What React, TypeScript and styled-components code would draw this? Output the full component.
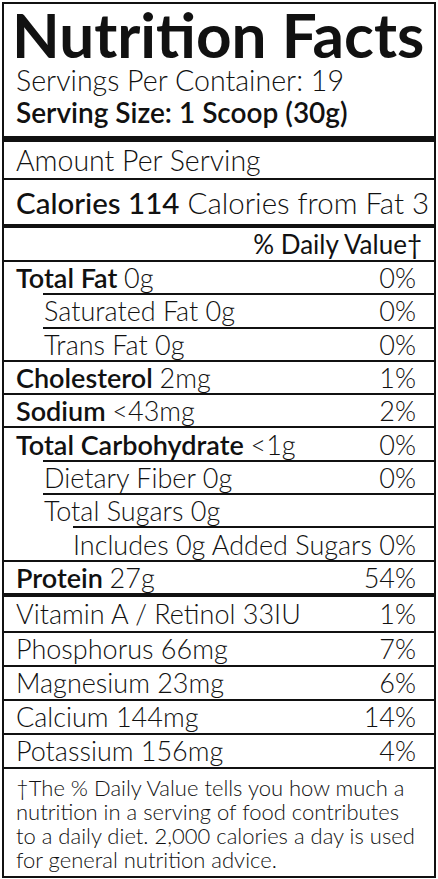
import styled, { createGlobalStyle } from "styled-components";

const GlobalStyle = createGlobalStyle`
  body {
    margin: 0;
    background: #ffffff;
    font-family: Lato, "Liberation Sans", sans-serif;
    color: #111111;
  }
`;

const Label = styled.div`
  box-sizing: border-box;
  margin: 2px 0 0 2px;
  width: 434px;
  height: 876px;
  border: 2px solid #111111;
  display: flex;
  flex-direction: column;
`;

const Header = styled.div`
  padding: 0 8px 8px 8px;
`;

const Title = styled.h1`
  margin: 0;
  font-size: 62px;
  font-weight: 700;
  line-height: 60px;
  white-space: nowrap;
`;

const ServingLine = styled.div<{ $bold?: boolean }>`
  font-size: ${({ $bold }) => ($bold ? 28 : 28.6)}px;
  line-height: 32px;
  padding-left: 4px;
  white-space: nowrap;
  font-weight: ${({ $bold }) => ($bold ? 600 : 300)};
`;

const ThickRule = styled.div<{ $size: number }>`
  flex: none;
  height: ${({ $size }) => $size}px;
  background: #111111;
`;

const Row = styled.div<{ $indent?: number; $first?: boolean; $tall?: boolean }>`
  box-sizing: border-box;
  flex: none;
  display: flex;
  justify-content: space-between;
  align-items: center;
  height: ${({ $tall }) => ($tall ? 34 : 33.3)}px;
  margin-left: ${({ $indent = 0 }) => [0, 39, 69][$indent]}px;
  padding: 0 18px 0 ${({ $indent = 0 }) => [12, 1, 0][$indent]}px;
  border-top: ${({ $first }) => ($first ? "0" : "2px solid #111111")};
  font-size: 27px;
  font-weight: 300;
  white-space: nowrap;
`;

const AmountRow = styled(Row)`
  height: 36px;
  font-size: 28.5px;
`;

const Name = styled.span`
  font-weight: 600;
`;

const CaloriesRow = styled.div`
  box-sizing: border-box;
  flex: none;
  height: 46px;
  display: flex;
  align-items: center;
  padding: 0 0 0 12px;
  border-top: 2px solid #111111;
  font-size: 29.5px;
  font-weight: 300;
  white-space: nowrap;
`;

const CaloriesStrong = styled.span`
  font-weight: 500;
  margin-right: 8px;
`;

const DailyHeader = styled.div`
  box-sizing: border-box;
  flex: none;
  height: 32px;
  display: flex;
  justify-content: flex-end;
  align-items: center;
  padding-right: 12px;
  font-size: 26px;
  font-weight: 400;
`;

const Footnote = styled.p`
  margin: 0;
  flex: 1;
  border-top: 2px solid #111111;
  padding: 7px 12px 0;
  font-size: 22px;
  line-height: 24px;
  font-weight: 300;
`;

type Nutrient = {
  name?: string;
  amount: string;
  dv?: string;
  indent?: number;
};

const nutrients: Nutrient[] = [
  { name: "Total Fat", amount: "0g", dv: "0%" },
  { amount: "Saturated Fat 0g", dv: "0%", indent: 1 },
  { amount: "Trans Fat 0g", dv: "0%", indent: 1 },
  { name: "Cholesterol", amount: "2mg", dv: "1%" },
  { name: "Sodium", amount: "<43mg", dv: "2%" },
  { name: "Total Carbohydrate", amount: "<1g", dv: "0%" },
  { amount: "Dietary Fiber 0g", dv: "0%", indent: 1 },
  { amount: "Total Sugars 0g", indent: 1 },
  { amount: "Includes 0g Added Sugars", dv: "0%", indent: 2 },
  { name: "Protein", amount: "27g", dv: "54%" },
];

const minerals: Nutrient[] = [
  { amount: "Vitamin A / Retinol 33IU", dv: "1%" },
  { amount: "Phosphorus 66mg", dv: "7%" },
  { amount: "Magnesium 23mg", dv: "6%" },
  { amount: "Calcium 144mg", dv: "14%" },
  { amount: "Potassium 156mg", dv: "4%" },
];

const NutrientRow = ({
  item,
  first,
  tall,
}: {
  item: Nutrient;
  first?: boolean;
  tall?: boolean;
}) => (
  <Row $indent={item.indent} $first={first} $tall={tall}>
    <span>
      {item.name && <Name>{item.name} </Name>}
      {item.amount}
    </span>
    <span>{item.dv}</span>
  </Row>
);

export default function App() {
  return (
    <>
      <GlobalStyle />
      <Label>
        <Header>
          <Title>Nutrition Facts</Title>
          <ServingLine>Servings Per Container: 19</ServingLine>
          <ServingLine $bold>Serving Size: 1 Scoop (30g)</ServingLine>
        </Header>
        <ThickRule $size={6} />
        <AmountRow $first>Amount Per Serving</AmountRow>
        <CaloriesRow>
          <CaloriesStrong>Calories 114</CaloriesStrong>
          Calories from Fat 3
        </CaloriesRow>
        <ThickRule $size={4} />
        <DailyHeader>% Daily Value†</DailyHeader>
        {nutrients.map((n) => (
          <NutrientRow key={n.amount} item={n} />
        ))}
        <ThickRule $size={4} />
        {minerals.map((n, i) => (
          <NutrientRow key={n.amount} item={n} first={i === 0} tall />
        ))}
        <Footnote>
          †The % Daily Value tells you how much a<br />
          nutrition in a serving of food contributes<br />
          to a daily diet. 2,000 calories a day is used<br />
          for general nutrition advice.
        </Footnote>
      </Label>
    </>
  );
}
